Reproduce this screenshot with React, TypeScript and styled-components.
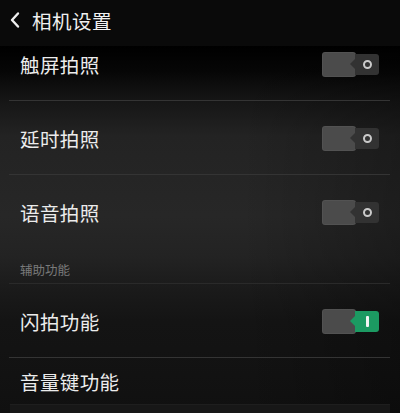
import React from "react";
import styled, { createGlobalStyle } from "styled-components";

const Global = createGlobalStyle`
  html, body { margin: 0; padding: 0; background: #0b0b0b; }
  body { font-family: "Noto Sans CJK SC", "Noto Sans", sans-serif; }
  #root { width: 400px; height: 413px; overflow: hidden; }
`;

const Page = styled.div`
  width: 400px;
  height: 413px;
  display: flex;
  flex-direction: column;
  background: #0b0b0b;
`;

const Header = styled.header`
  height: 46px;
  flex: none;
  display: flex;
  align-items: center;
  gap: 11px;
  padding: 0 0 6px 9px;
  box-sizing: border-box;
  background: #0a0a0a;
  position: relative;
  z-index: 1;
`;

const Title = styled.h1`
  margin: 0;
  font-size: 19.5px;
  font-weight: 400;
  color: #f0f0f0;
  letter-spacing: 0.5px;
`;

const Content = styled.main`
  flex: 1;
  overflow: hidden;
  background:
    linear-gradient(90deg, rgba(0,0,0,0) 60%, rgba(0,0,0,0.25) 100%),
    linear-gradient(180deg, #000 0px, #060606 25px, #161616 55px, #232323 90px, #272727 170px, #232323 210px, #1a1a1a 245px, #141414 275px, #121212 330px, #101010 367px);
`;

const List = styled.div`
  margin-top: -19px;
  display: flex;
  flex-direction: column;
`;

const Row = styled.div<{ $last?: boolean }>`
  height: 74px;
  display: flex;
  align-items: center;
  justify-content: space-between;
  padding: 0 21px 0 20px;
  position: relative;
  box-sizing: border-box;
  &::after {
    content: "";
    position: absolute;
    left: 9px;
    right: 10px;
    bottom: 0;
    height: 1px;
    background: ${(p) => (p.$last ? "transparent" : "#343434")};
  }
`;

const Label = styled.span`
  font-size: 19.5px;
  color: #ececec;
  letter-spacing: 0.4px;
`;

const Section = styled.div`
  height: 35px;
  display: flex;
  align-items: flex-end;
  padding: 0 20px 6px;
  box-sizing: border-box;
  font-size: 12.5px;
  line-height: 16px;
  color: #7a7a7a;
  position: relative;
  &::after {
    content: "";
    position: absolute;
    left: 9px;
    right: 10px;
    bottom: 0;
    height: 1px;
    background: #2a2a2a;
  }
`;

const Toggle = styled.div`
  width: 57px;
  height: 25px;
  display: flex;
  align-items: center;
  position: relative;
`;

const Thumb = styled.div`
  width: 34px;
  height: 25px;
  border-radius: 3px;
  background: #4b4b4b;
  box-shadow: inset 0 0 0 1px rgba(255,255,255,0.04);
`;

const Track = styled.div<{ $on?: boolean }>`
  width: 24px;
  height: 21px;
  margin-left: -1px;
  border-radius: 0 3px 3px 0;
  background: ${(p) => (p.$on ? "#1c9a62" : "#323232")};
  position: relative;
  display: flex;
  align-items: center;
  justify-content: center;
  &::before {
    content: "";
    position: absolute;
    left: -5px;
    top: 50%;
    margin-top: -5px;
    border-style: solid;
    border-width: 5px 5px 5px 0;
    border-color: transparent ${(p) => (p.$on ? "#1c9a62" : "#323232")} transparent transparent;
  }
`;

const Ring = styled.div`
  width: 5px;
  height: 5px;
  border-radius: 50%;
  border: 2.5px solid #cacaca;
  margin-left: 1px;
`;

const Bar = styled.div`
  width: 2.5px;
  height: 11px;
  background: #f4f4f4;
  border-radius: 1px;
  margin-left: 1px;
`;

const NextCard = styled.div`
  margin: 0 10px;
  height: 20px;
  background: #171717;
  border-top: 1px solid #1e1e1e;
`;

function Switch({ on }: { on?: boolean }) {
  return (
    <Toggle>
      <Thumb />
      <Track $on={on}>{on ? <Bar /> : <Ring />}</Track>
    </Toggle>
  );
}

const Back = () => (
  <svg width="12" height="18" viewBox="0 0 12 18">
    <path d="M9 2.5 L3 9 L9 15.5" fill="none" stroke="#f0f0f0" strokeWidth="2.4" strokeLinecap="round" strokeLinejoin="round" />
  </svg>
);

export default function App() {
  return (
    <Page>
      <Global />
      <Header>
        <Back />
        <Title>相机设置</Title>
      </Header>
      <Content>
        <List>
          <Row>
            <Label>触屏拍照</Label>
            <Switch />
          </Row>
          <Row>
            <Label>延时拍照</Label>
            <Switch />
          </Row>
          <Row $last>
            <Label>语音拍照</Label>
            <Switch />
          </Row>
          <Section>辅助功能</Section>
          <Row>
            <Label>闪拍功能</Label>
            <Switch on />
          </Row>
          <Row $last style={{ height: 46 }}>
            <Label>音量键功能</Label>
          </Row>
          <NextCard />
        </List>
      </Content>
    </Page>
  );
}
